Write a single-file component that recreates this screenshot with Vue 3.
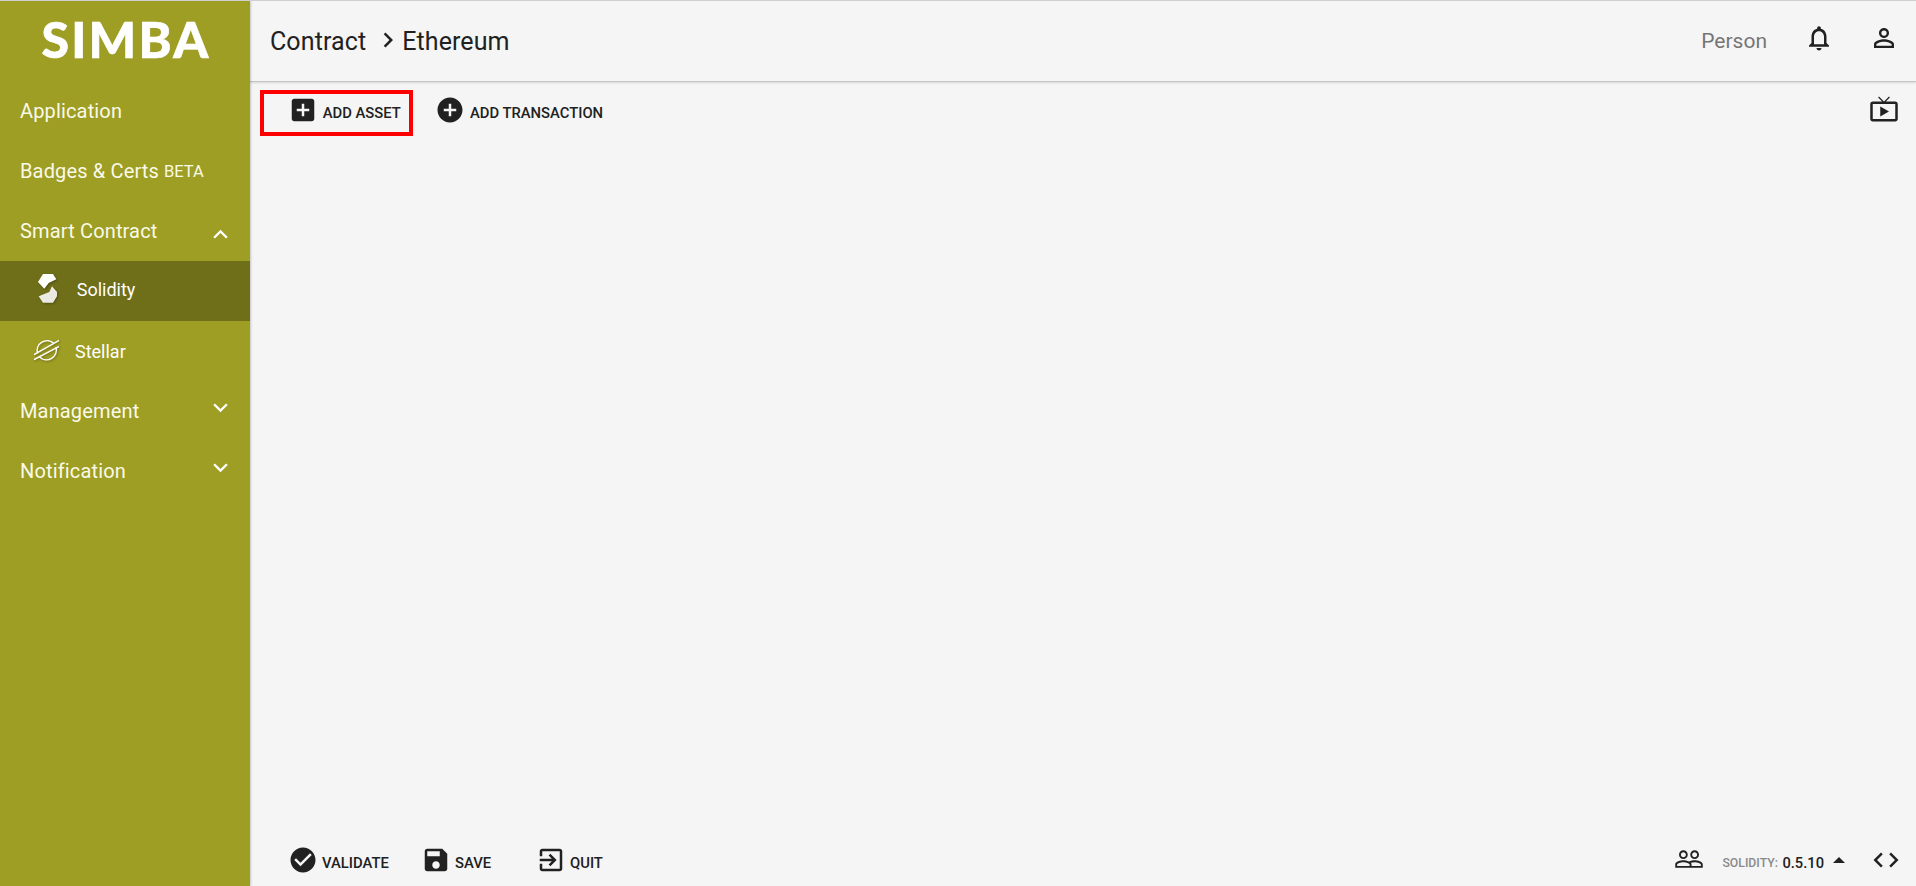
<script setup>
const mainItems = [
  { label: 'Application' },
  { label: 'Badges & Certs', beta: 'BETA' },
]
</script>

<template>
  <div class="page">
    <aside class="sidebar">
      <div class="logo">SIMBA</div>
      <nav class="nav">
        <div v-for="item in mainItems" :key="item.label" class="nav-item">
          <span>{{ item.label }}</span>
          <span v-if="item.beta" class="beta">{{ item.beta }}</span>
        </div>
        <div class="nav-item">
          <span>Smart Contract</span>
          <svg class="chev" viewBox="0 0 24 24"><path d="M7.410 15.410 12 10.830l4.590 4.580L18 14l-6-6-6 6z" /></svg>
        </div>
        <div class="sub-item active">
          <svg class="solidity" viewBox="13 18 57 86">
            <path d="M28 18H58L68 34 45 45 32 62 13 42z" />
            <path d="M70 72 55 55 47 72 15 85 28 104H58L70 85z" opacity=".88" />
          </svg>
          <span class="sub-label">Solidity</span>
        </div>
        <div class="sub-item stellar-row">
          <svg class="stellar" viewBox="0 0 25.300 23" fill="none" stroke="#fff" stroke-width="1.500">
            <path d="M3.500 14.500A10 10 0 0 1 20 4.500" />
            <path d="M22 8A10 10 0 0 1 5.500 18" />
            <path d="M0 15.700 25.300 1.300M0 20.700 25.300 7.300" />
          </svg>
          <span>Stellar</span>
        </div>
        <div class="nav-item">
          <span>Management</span>
          <svg class="chev down" viewBox="0 0 24 24"><path d="M7.410 8.590 12 13.170l4.590-4.580L18 10l-6 6-6-6z" /></svg>
        </div>
        <div class="nav-item">
          <span>Notification</span>
          <svg class="chev down" viewBox="0 0 24 24"><path d="M7.410 8.590 12 13.170l4.590-4.580L18 10l-6 6-6-6z" /></svg>
        </div>
      </nav>
    </aside>

    <main class="main">
      <header class="header">
        <div class="crumbs">
          <span>Contract</span>
          <svg class="crumb-sep" viewBox="0 0 24 24"><path d="M8.590 16.590 13.170 12 8.590 7.410 10 6l6 6-6 6z" /></svg>
          <span>Ethereum</span>
        </div>
        <div class="header-right">
          <span class="person">Person</span>
          <svg class="h-icon bell" viewBox="0 0 24 24"><path d="M12 22c1.100 0 2-.9 2-2h-4c0 1.100.9 2 2 2zm6-6v-5c0-3.070-1.630-5.640-4.500-6.320V4c0-.83-.67-1.500-1.500-1.500s-1.500.67-1.500 1.500v.68C7.640 5.360 6 7.920 6 11v5l-2 2v1h16v-1l-2-2zm-2 1H8v-6c0-2.480 1.510-4.500 4-4.500s4 2.020 4 4.500v6z" /></svg>
          <svg class="h-icon" viewBox="0 0 24 24"><path d="M12 5.900a2.100 2.100 0 1 1 0 4.200 2.100 2.100 0 0 1 0-4.200m0 9c2.970 0 6.100 1.460 6.100 2.100v1.100H5.900V17c0-.64 3.130-2.100 6.100-2.100M12 4C9.790 4 8 5.790 8 8s1.790 4 4 4 4-1.790 4-4-1.790-4-4-4zm0 9c-2.670 0-8 1.340-8 4v3h16v-3c0-2.660-5.330-4-8-4z" /></svg>
        </div>
      </header>

      <div class="toolbar">
        <div class="tools-left">
          <button class="tool boxed">
            <svg class="ic lg" viewBox="0 0 24 24"><path d="M19 3H5c-1.110 0-2 .9-2 2v14c0 1.100.89 2 2 2h14c1.100 0 2-.9 2-2V5c0-1.100-.9-2-2-2zm-2 10h-4v4h-2v-4H7v-2h4V7h2v4h4v2z" /></svg>
            <span>ADD ASSET</span>
          </button>
          <button class="tool tx">
            <svg class="ic lg" viewBox="0 0 24 24"><path d="M12 2C6.480 2 2 6.480 2 12s4.480 10 10 10 10-4.480 10-10S17.520 2 12 2zm5 11h-4v4h-2v-4H7v-2h4V7h2v4h4v2z" /></svg>
            <span>ADD TRANSACTION</span>
          </button>
        </div>
        <svg class="tv" viewBox="0 0 24 24"><path d="M9 10v8l7-4zm12-4h-7.580l3.290-3.290L16 2l-4 4h-.03l-4-4-.69.71L10.560 6H3c-1.100 0-2 .9-2 2v12c0 1.100.9 2 2 2h18c1.100 0 2-.9 2-2V8c0-1.100-.9-2-2-2zm0 14H3V8h18v12z" /></svg>
      </div>

      <div class="canvas"></div>

      <footer class="footer">
        <div class="foot-left">
          <button class="tool validate">
            <svg class="ic lg" viewBox="0 0 24 24"><path d="M12 2C6.480 2 2 6.480 2 12s4.480 10 10 10 10-4.480 10-10S17.520 2 12 2zm-2 15-5-5 1.410-1.410L10 14.170l7.590-7.590L19 8l-9 9z" /></svg>
            <span>VALIDATE</span>
          </button>
          <button class="tool save">
            <svg class="ic lg" viewBox="0 0 24 24"><path d="M17 3H5c-1.110 0-2 .9-2 2v14c0 1.100.89 2 2 2h14c1.100 0 2-.9 2-2V7l-4-4zm-5 16c-1.660 0-3-1.340-3-3s1.340-3 3-3 3 1.340 3 3-1.340 3-3 3zm3-10H5V5h10v4z" /></svg>
            <span>SAVE</span>
          </button>
          <button class="tool quit">
            <svg class="ic lg" viewBox="0 0 24 24"><path d="M10.090 15.590 11.500 17l5-5-5-5-1.410 1.410L12.670 11H3v2h9.670l-2.580 2.590zM19 3H5c-1.110 0-2 .9-2 2v4h2V5h14v14H5v-4H3v4c0 1.100.89 2 2 2h14c1.100 0 2-.9 2-2V5c0-1.100-.9-2-2-2z" /></svg>
            <span>QUIT</span>
          </button>
        </div>
        <div class="foot-right">
          <svg class="people" viewBox="0 0 24 24"><path d="M16.500 13c-1.200 0-3.070.34-4.500 1-1.430-.67-3.300-1-4.500-1C5.330 13 1 14.080 1 16.250V19h22v-2.750c0-2.170-4.330-3.250-6.500-3.250zm-4 4.500h-10v-1.250c0-.54 2.560-1.750 5-1.750s5 1.210 5 1.750v1.250zm9 0H14v-1.250c0-.46-.2-.86-.52-1.220.88-.3 1.960-.53 3.020-.53 2.440 0 5 1.210 5 1.750v1.250zM7.500 12c1.930 0 3.500-1.570 3.500-3.500S9.430 5 7.500 5 4 6.570 4 8.500 5.570 12 7.500 12zm0-5.500c1.100 0 2 .9 2 2s-.9 2-2 2-2-.9-2-2 .9-2 2-2zm9 5.500c1.930 0 3.500-1.570 3.500-3.500S18.430 5 16.500 5 13 6.570 13 8.500s1.570 3.500 3.500 3.500zm0-5.500c1.100 0 2 .9 2 2s-.9 2-2 2-2-.9-2-2 .9-2 2-2z" /></svg>
          <span class="sol-label">SOLIDITY:</span>
          <span class="sol-ver">0.5.10</span>
          <span class="caret"></span>
          <svg class="code" viewBox="0 0 24 24"><path d="M9.400 16.600 4.800 12l4.600-4.600L8 6l-6 6 6 6 1.400-1.400zm5.200 0 4.600-4.600-4.600-4.600L16 6l6 6-6 6-1.400-1.400z" /></svg>
        </div>
      </footer>
    </main>
  </div>
</template>

<style scoped>
.page {
  display: flex;
  width: 1916px;
  height: 886px;
  overflow: hidden;
  background: #f5f5f5;
  font-family: Roboto, "Liberation Sans", sans-serif;
  color: #212121;
  border-top: 1px solid #cfcfcf;
  box-sizing: border-box;
}
.sidebar {
  width: 250px;
  flex: none;
  background: #9e9d24;
  color: #fff;
  box-shadow: 1px 0 2px rgba(0, 0, 0, .2);
  z-index: 2;
}
.logo {
  height: 76px;
  display: flex;
  align-items: center;
  justify-content: center;
  padding-left: 2px;
  font-family: Lato, sans-serif;
  font-weight: 900;
  font-size: 50px;
  letter-spacing: 2.2px;
  line-height: 1;
  -webkit-text-stroke: .6px #fff;
}
.nav { display: flex; flex-direction: column; padding-top: 4px; }
.nav-item {
  height: 60px;
  display: flex;
  align-items: center;
  padding-left: 20px;
  font-size: 20px;
  letter-spacing: .15px;
  position: relative;
  color: #fafae8;
}
.beta { font-size: 16.500px; margin-left: 5px; letter-spacing: 0; }
.chev { position: absolute; left: 205.500px; top: 19px; width: 29px; height: 29px; fill: #fff; }
.chev.down { top: 12px; }
.sub-item {
  height: 60px;
  display: flex;
  align-items: center;
  font-size: 18px;
  color: #fff;
}
.active { background: #6f6e19; padding-left: 38px; gap: 19.700px; }
.sub-label { margin-top: -3px; }
.stellar-row { padding-left: 34px; gap: 15.700px; }
.solidity { width: 19px; height: 28.700px; fill: #fff; margin-top: -5.500px; filter: drop-shadow(1px 1px 1px rgba(0,0,0,.3)); }
.stellar { width: 25.300px; height: 23px; margin-top: -2px; filter: drop-shadow(1px 1px 1px rgba(0,0,0,.3)); }
.main { flex: 1; display: flex; flex-direction: column; min-width: 0; }
.header {
  height: 80px;
  flex: none;
  display: flex;
  align-items: center;
  justify-content: space-between;
  padding: 0 17px 0 20px;
  border-bottom: 1px solid #c4c4c4;
  box-shadow: 0 1px 2px rgba(0, 0, 0, .12);
}
.crumbs { display: flex; align-items: center; font-size: 25px; letter-spacing: .1px; }
.crumb-sep { width: 30px; height: 30px; margin: -3px -1px 0 7px; fill: #212121; }
.header-right { display: flex; align-items: center; }
.person { font-size: 21px; color: #757575; margin-right: 37px; }
.h-icon { width: 30px; height: 30px; fill: #212121; margin-bottom: 6px; }
.bell { margin-right: 35px; }
.toolbar {
  height: 46px;
  margin-top: 8px;
  flex: none;
  display: flex;
  align-items: center;
  justify-content: space-between;
  padding: 0 17px 0 10px;
}
.tools-left { display: flex; align-items: center; }
.tool {
  display: flex;
  align-items: center;
  border: 0;
  background: none;
  padding: 0;
  font-family: inherit;
  font-size: 14.800px;
  font-weight: 500;
  color: #212121;
}
.boxed {
  width: 153px;
  height: 46px;
  box-sizing: border-box;
  border: 4px solid #f00;
  padding-left: 23.500px;
  gap: 5.200px;
}
.tx { margin-left: 22px; gap: 5px; }
.ic { fill: #212121; margin-top: -6px; }
.ic.lg { width: 30px; height: 30px; }
.tv { width: 30px; height: 30px; fill: #212121; margin-top: -8.500px; }
.canvas { flex: 1; }
.footer {
  height: 54px;
  box-sizing: border-box;
  flex: none;
  display: flex;
  align-items: center;
  justify-content: space-between;
  padding: 7px 15.500px 0 37.500px;
}
.foot-left { display: flex; align-items: center; }
.foot-left .tool { gap: 4.500px; }
.validate { width: 133px; }
.save { width: 115px; }
.foot-right { display: flex; align-items: center; }
.people { width: 30px; height: 30px; fill: #212121; margin-right: 18px; margin-top: -7px; }
.sol-label { font-size: 12.250px; font-weight: 500; color: #8a8a8a; margin-right: 4.500px; }
.sol-ver { font-size: 14.700px; font-weight: 500; }
.caret {
  width: 0;
  height: 0;
  border: 6px solid transparent;
  border-top: 0;
  border-bottom: 6px solid #212121;
  margin: -5px 0 0 9px;
}
.code { width: 30px; height: 30px; fill: #212121; margin-left: 25.500px; margin-top: -6px; }
</style>

<style>
html, body { margin: 0; padding: 0; overflow: hidden; }
</style>
